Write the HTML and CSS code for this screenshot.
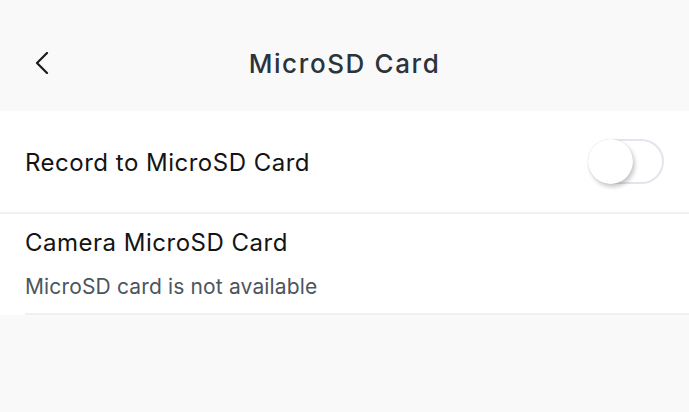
FILE: index.html
```html
<!DOCTYPE html>
<html>
<head>
<meta charset="utf-8">
<link rel="stylesheet" href="styles.css">
</head>
<body>
<div class="page">
  <header class="topbar">
    <button class="back" aria-label="Back">
      <svg width="14" height="22" viewBox="0 0 14 22"><path d="M12 1 L2 11 L12 21" fill="none" stroke="#1a1a1a" stroke-width="2.2" stroke-linecap="round" stroke-linejoin="round"/></svg>
    </button>
    <h1 class="title">MicroSD Card</h1>
  </header>
  <section class="list">
    <div class="row row-toggle">
      <span class="label">Record to MicroSD Card</span>
      <span class="switch"><span class="knob"></span></span>
    </div>
    <div class="row row-info">
      <span class="label">Camera MicroSD Card</span>
      <span class="sub">MicroSD card is not available</span>
    </div>
  </section>
</div>
</body>
</html>
```
FILE: styles.css
```css
html, body {
  margin: 0;
  padding: 0;
  background: #f9f9f9;
  font-family: Inter, "Noto Sans", sans-serif;
}
.page {
  width: 689px;
  height: 412px;
  background: #f9f9f9;
}
.topbar {
  height: 111px;
  display: flex;
  align-items: center;
  justify-content: center;
  position: relative;
}
.back {
  position: absolute;
  left: 35px;
  top: 52px;
  border: 0;
  background: none;
  padding: 0;
  display: flex;
}
.title {
  margin: 17px 0 0 0;
  font-size: 26px;
  line-height: 30px;
  font-weight: 500;
  letter-spacing: 1.6px;
  color: #2c333b;
}
.list {
  background: #fff;
}
.row-toggle {
  height: 101px;
  display: flex;
  align-items: center;
  justify-content: space-between;
  padding: 0 25px;
  border-bottom: 2px solid #eff0f1;
}
.label {
  font-size: 24px;
  letter-spacing: 0.5px;
  color: #141414;
}
.row-toggle .label {
  margin-top: 2px;
}
.row-info {
  height: 99px;
  display: flex;
  flex-direction: column;
  margin-left: 25px;
  border-bottom: 2px solid #eff0f1;
}
.row-info .label {
  margin-top: 14px;
  line-height: 30px;
}
.sub {
  margin-top: 16px;
  font-size: 21px;
  line-height: 26px;
  letter-spacing: 0.15px;
  color: #4b5560;
}
.switch {
  width: 76px;
  height: 45px;
  box-sizing: border-box;
  border: 2px solid #e1e6ec;
  border-radius: 23px;
  background: #fff;
  position: relative;
  display: block;
}
.knob {
  position: absolute;
  left: -2px;
  top: -2px;
  width: 45px;
  height: 45px;
  border-radius: 50%;
  background: #fff;
  box-shadow: 2px 3px 4px rgba(0,0,0,0.22), 0 0 1px rgba(0,0,0,0.12);
}
```
